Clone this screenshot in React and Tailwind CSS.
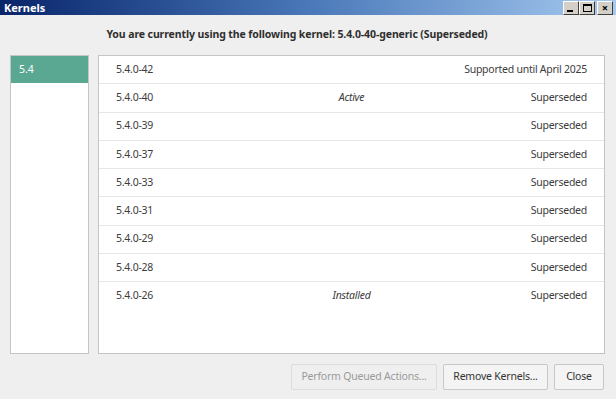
import React from 'react';

const kernels = [
  { v: '5.4.0-42', mid: '', status: 'Supported until April 2025' },
  { v: '5.4.0-40', mid: 'Active', status: 'Superseded' },
  { v: '5.4.0-39', mid: '', status: 'Superseded' },
  { v: '5.4.0-37', mid: '', status: 'Superseded' },
  { v: '5.4.0-33', mid: '', status: 'Superseded' },
  { v: '5.4.0-31', mid: '', status: 'Superseded' },
  { v: '5.4.0-29', mid: '', status: 'Superseded' },
  { v: '5.4.0-28', mid: '', status: 'Superseded' },
  { v: '5.4.0-26', mid: 'Installed', status: 'Superseded' },
];

function WinButton({ children }) {
  return (
    <div className="w-[16px] h-[14px] bg-[#d4d0c8] border border-t-white border-l-white border-r-[#404040] border-b-[#404040] flex items-center justify-center">
      {children}
    </div>
  );
}

export default function App() {
  return (
    <div className="w-[616px] h-[399px] bg-[#efefef] flex flex-col text-[#3c3c3c]" style={{ fontFamily: '"Noto Sans", "Open Sans", sans-serif' }}>
      {/* title bar */}
      <div className="h-[15px] flex items-center justify-between pl-[4px] pr-[3px] bg-gradient-to-r from-[#0a246a] via-[#4a78b8] to-[#a6caf0]">
        <span className="text-white text-[11px] font-bold leading-none">Kernels</span>
        <div className="flex items-center">
          <WinButton>
            <div className="w-[6px] h-[2px] bg-black mt-[6px] -ml-[2px]" />
          </WinButton>
          <WinButton>
            <div className="w-[9px] h-[8px] border border-black border-t-2" />
          </WinButton>
          <div className="ml-[2px]">
            <WinButton>
              <span className="text-[11px] font-bold leading-none text-black">×</span>
            </WinButton>
          </div>
        </div>
      </div>

      <div className="h-[40px] flex items-center justify-center pr-[22px] text-[10.5px] tracking-[-0.1px] font-bold text-[#2e2e2e]">
        You are currently using the following kernel: 5.4.0-40-generic (Superseded)
      </div>

      <div className="flex gap-[9px] pl-[10px] pr-[11px] h-[299px]">
        <div className="w-[79px] bg-white border border-[#c4c4c4]">
          <div className="h-[27px] bg-[#5aa892] text-white text-[10.5px] flex items-center pl-[8px]">5.4</div>
        </div>
        <div className="flex-1 bg-white border border-[#c4c4c4]">
          {kernels.map((k, i) => (
            <div
              key={k.v}
              className={`h-[28.25px] grid grid-cols-[1fr_1fr_1fr] items-center pl-[17px] pr-[17px] text-[10.5px] tracking-[-0.25px] ${i < kernels.length - 1 ? 'border-b border-[#e6e6e6]' : ''}`}
            >
              <span>{k.v}</span>
              <span className="italic text-center">{k.mid}</span>
              <span className="text-right">{k.status}</span>
            </div>
          ))}
        </div>
      </div>

      <div className="flex justify-end gap-[6px] pr-[12px] mt-[10px] text-[10.5px] tracking-[-0.2px]">
        <button className="w-[146px] h-[26px] border border-[#dcdcdc] bg-[#efefef] text-[#9a9a9a] rounded-[2px]">
          Perform Queued Actions...
        </button>
        <button className="w-[105px] h-[26px] border border-[#c8c8c8] bg-[#f4f4f4] text-[#333] rounded-[2px]">
          Remove Kernels...
        </button>
        <button className="w-[50px] h-[26px] border border-[#c8c8c8] bg-[#f4f4f4] text-[#333] rounded-[2px]">
          Close
        </button>
      </div>
    </div>
  );
}
